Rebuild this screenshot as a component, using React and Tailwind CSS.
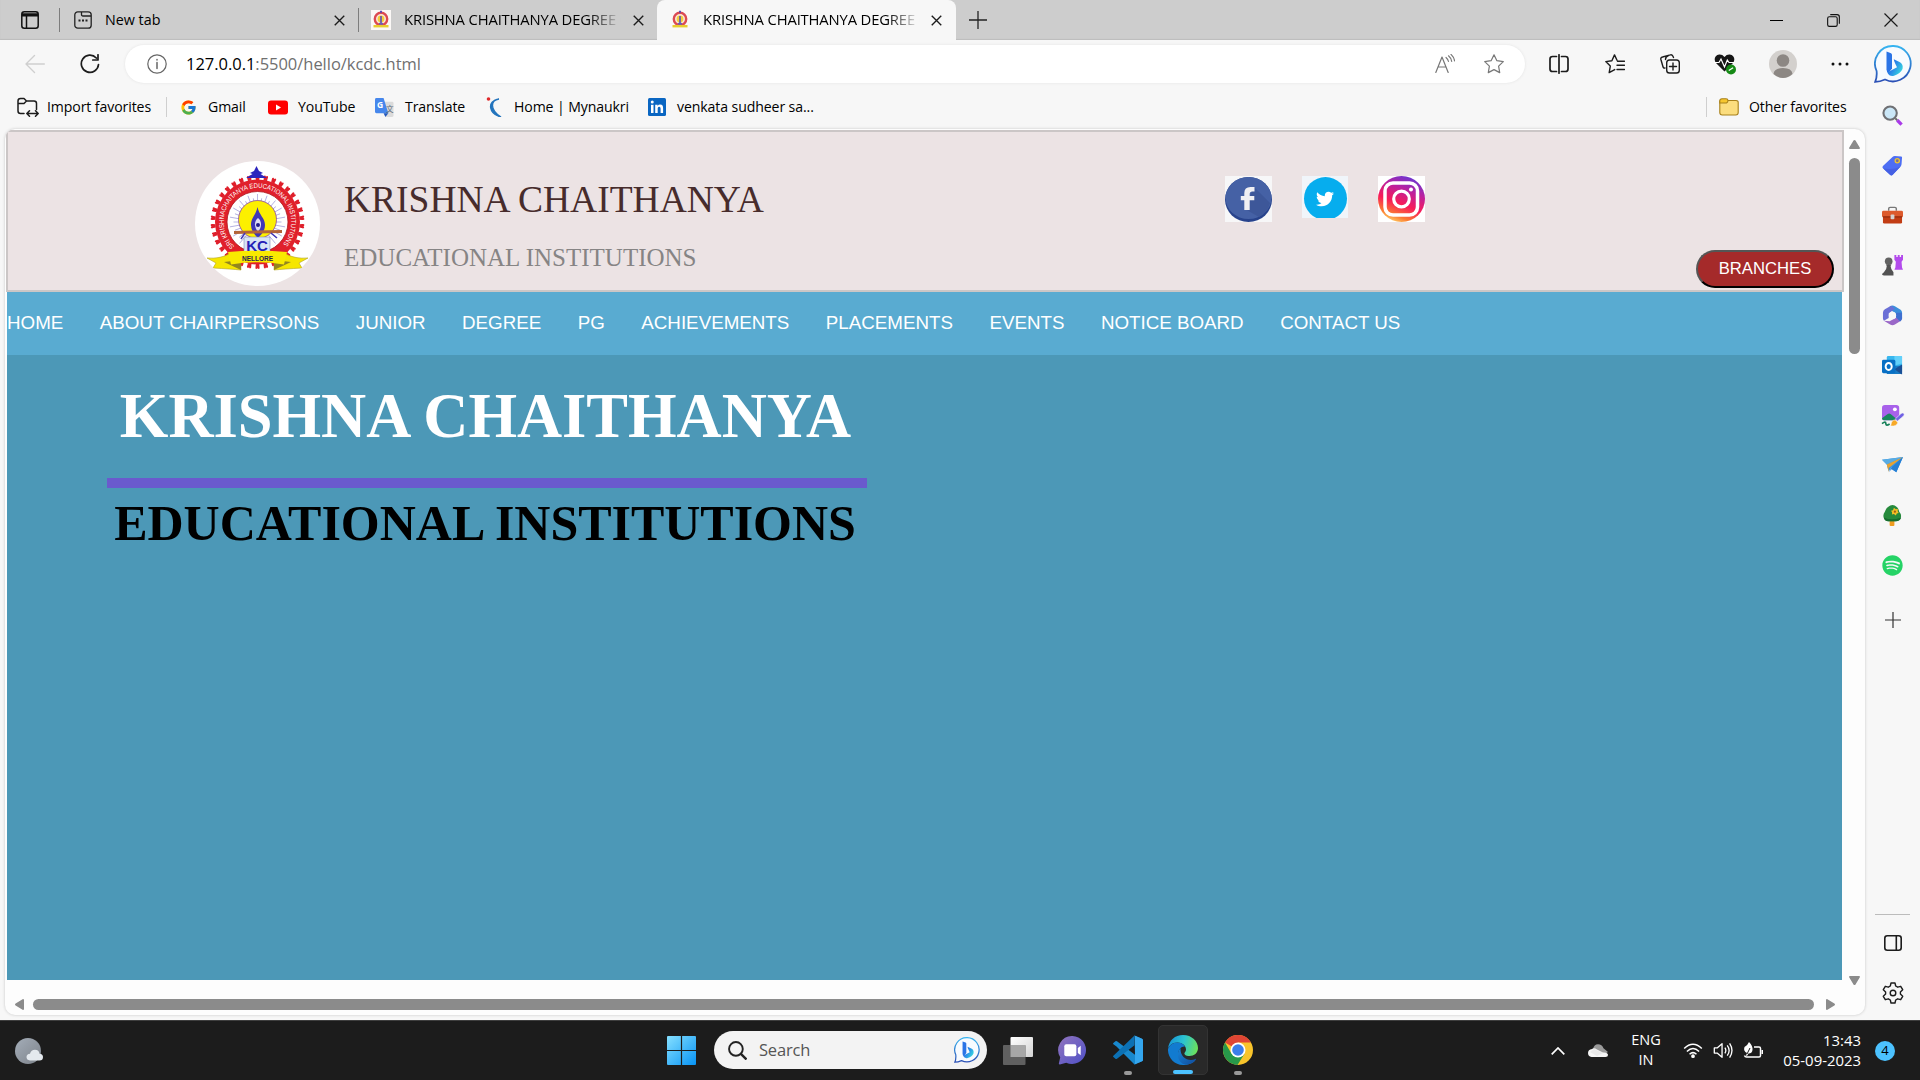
import React from "react";
import { FcGoogle } from "react-icons/fc";
import { FaTwitter, FaSpotify } from "react-icons/fa";

const ui = "font-['Open_Sans','Noto_Sans',sans-serif]";

/* ---------- shared drawings ---------- */

function Seal({ className }) {
  const teeth = Array.from({ length: 34 }, (_, i) => (i * 360) / 34);
  const rays = Array.from({ length: 36 }, (_, i) => i * 10);
  return (
    <svg viewBox="0 0 125 125" className={className}>
      <defs>
        <path id="sealArc" d="M39.500 85.500 A33.800 33.800 0 1 1 85.500 85.500" />
      </defs>
      {teeth.map((a) => (
        <g key={a} transform={`rotate(${a} 62.500 61)`}>
          <path d="M60.800 19 L60.500 16.500 Q59.800 14 61.500 14 L62.500 14.800 L63.500 14 Q65.200 14 64.500 16.500 L64.200 19 Z" fill="#df1f2b" />
        </g>
      ))}
      <circle cx="62.500" cy="61" r="42.500" fill="#e0202b" />
      <circle cx="62.500" cy="61" r="30.500" fill="#fff" stroke="#a9161d" strokeWidth="0.800" />
      <text fill="#fff" fontSize="6.800" className="font-['Liberation_Sans',sans-serif]">
        <textPath href="#sealArc" textLength="158" lengthAdjust="spacingAndGlyphs">SRI KRISHNACHAITANYA EDUCATIONAL INSTITUTIONS</textPath>
      </text>
      {rays.map((a) => (
        <line key={a} x1="62.500" y1={a % 20 ? 37 : 33} x2="62.500" y2="44" stroke="#8b86d0" strokeWidth="0.600" transform={`rotate(${a} 62.500 61)`} />
      ))}
      <circle cx="62.500" cy="58.500" r="19" fill="#fcf000" stroke="#8a45a0" strokeWidth="0.800" />
      <path d="M61.500 5 L64 10 L68 12 L65.500 13 L72 17 H51 L57.500 13 L55 12 L59 10 Z" fill="#2c25bd" />
      <path d="M62.500 46 C64 54 70 57 70 64 C70 70 66 74 63 77 C60 74 56 70 56 64 C56 57 61 54 62.500 46Z" fill="#4037b7" />
      <path d="M63 57 C67 60 67 66 63 71 C59 66 59 60 63 57Z" fill="#dcdcf4" />
      <circle cx="63" cy="64" r="2" fill="#221a8c" />
      <path d="M39 71.500 L87 70.500" stroke="#b3653a" strokeWidth="3" />
      <path d="M50 72l-4 6 M76 72l6 5" stroke="#4037b7" strokeWidth="1.500" />
      <rect x="49" y="76" width="26" height="17" fill="#d7e3f5" stroke="#6f79ad" strokeWidth="0.500" />
      <path d="M12 97 Q25 98 34 93 L45 91 L46 109 Q36 108 18 107 L21 102 Z M113 97 Q100 98 91 93 L80 91 L79 109 Q89 108 107 107 L104 102 Z" fill="#f6e600" stroke="#b1a321" strokeWidth="0.600" />
      <path d="M29 101 L46 99 V109 Z M96 101 L79 99 V109 Z" fill="#93851f" />
      <path d="M33 91 Q62 88 92 91 L89 103.500 Q62 99 36 103.500 Z" fill="#f9ea00" />
      <text x="62" y="90" textAnchor="middle" fontSize="15" fontWeight="700" fill="#2521b6" className="font-['Liberation_Sans',sans-serif]">KC</text>
      <text x="62.500" y="100" textAnchor="middle" fontSize="6.500" fontWeight="700" fill="#27254f" className="font-['Liberation_Sans',sans-serif]">NELLORE</text>
    </svg>
  );
}

function MiniSeal() {
  return (
    <svg viewBox="0 0 20 20" className="size-5 bg-[#fbf8f6]">
      <circle cx="10" cy="9" r="6.200" fill="#fae8d7" stroke="#dc4a52" strokeWidth="2.400" />
      <circle cx="10" cy="9" r="3.400" fill="#f3cf3a" />
      <path d="M10 6v7" stroke="#5b4bb8" strokeWidth="1.600" />
      <path d="M10 .800v2" stroke="#5046b5" strokeWidth="1.800" />
      <path d="M2.500 16.200h15" stroke="#e9cd2e" strokeWidth="2.400" />
      <path d="M8 13.800h4" stroke="#6c5fb5" strokeWidth="1.800" />
    </svg>
  );
}

function Bing({ className }) {
  return (
    <svg viewBox="0 0 38 38" className={className}>
      <defs>
        <linearGradient id="bingRing" x1="0" y1="0" x2="0" y2="1">
          <stop offset="0" stopColor="#36b4f0" />
          <stop offset="1" stopColor="#2b4fb5" />
        </linearGradient>
        <linearGradient id="bingB" x1="0" y1="0" x2="1" y2="0.600">
          <stop offset="0" stopColor="#2454d6" />
          <stop offset="0.500" stopColor="#2a86e8" />
          <stop offset="1" stopColor="#36d5e0" />
        </linearGradient>
      </defs>
      <path d="M19.500 1 A17.700 17.700 0 1 1 11 34.500 Q6 36.800 1.200 36.800 Q3.200 32 2.600 26 A17.700 17.700 0 0 1 19.500 1Z" fill="#f7fbff" stroke="url(#bingRing)" strokeWidth="1.800" />
      <path d="M12.500 6.500 L17 8.200 Q18 8.700 18 10 V23.500 L14.500 28 Q12.500 27 12.500 24.500Z" fill="#2a74e6" />
      <path d="M19.800 14.300 L26 17.300 Q29.500 19.500 28.500 24 Q26.500 28.500 20 30.800 Q15.500 32 13.300 27.500 L23 22.300 L21.300 18.700 Q20 16.500 19.800 14.300Z" fill="url(#bingB)" />
    </svg>
  );
}

function Close({ className = "size-[11px]" }) {
  return (
    <svg viewBox="0 0 12 12" className={className} fill="none" stroke="#1b1b1b" strokeWidth="1.500">
      <path d="M.8.8l10.400 10.400M11.200.8L.8 11.200" />
    </svg>
  );
}

/* ---------- browser chrome ---------- */

function TabTitle() {
  return (
    <span className="-mt-px ml-[13px] w-[217px] overflow-hidden whitespace-nowrap tracking-[-0.150px] [mask-image:linear-gradient(to_right,black_85%,transparent_100%)]">KRISHNA CHAITHANYA DEGREE C</span>
  );
}

function TabStrip() {
  return (
    <div className="flex h-10 items-stretch bg-[#cdcdcd] text-[14.800px] text-black shadow-[inset_0_-1px_1px_#bdbdbd]">
      <div className="flex w-[59px] items-center pl-[21px]">
        <svg viewBox="0 0 18 18" className="size-[18px]" fill="none" stroke="#111" strokeWidth="1.500">
          <rect x=".8" y=".8" width="16.400" height="16.400" rx="2.500" />
          <path d="M1 3.400h16M1 4.500h16" strokeWidth="2.200" />
          <path d="M5.500 5v12" />
        </svg>
      </div>
      <div className="my-2 w-px bg-[#7d7d7d]" />
      <div className="flex w-[298px] items-center pl-[14px]">
        <svg viewBox="0 0 18 18" className="size-[18px]" fill="none" stroke="#222" strokeWidth="1.300">
          <rect x=".8" y=".8" width="16.400" height="16.400" rx="3" />
          <path d="M7.500 1v2.500q0 1.500 1.500 1.500h8" />
          <path d="M4.500 9.500h2M8 9.500h2M11.500 9.500h2" strokeWidth="2" />
        </svg>
        <span className="-mt-px ml-[13px] w-[229px] whitespace-nowrap text-[14.300px]">New tab</span>
        <Close />
      </div>
      <div className="my-2 w-px bg-[#7d7d7d]" />
      <div className="flex w-[298px] items-center pl-[12px]">
        <MiniSeal />
        <TabTitle />
        <Close className="ml-[12px] size-[11px]" />
      </div>
      <div className="flex w-[299px] items-center rounded-t-lg bg-[#f7f7f7] pl-[13px]">
        <MiniSeal />
        <TabTitle />
        <Close className="ml-[11px] size-[11px]" />
      </div>
      <div className="flex items-center pl-[13px]">
        <svg viewBox="0 0 18 18" className="size-[18px]" stroke="#222" strokeWidth="1.300"><path d="M9 0v18M0 9h18" /></svg>
      </div>
      <div className="ml-auto flex items-center pr-[22px]">
        <div className="h-px w-[13px] bg-black" />
        <svg viewBox="0 0 14 14" className="ml-[44px] size-[13px]" fill="none" stroke="#111" strokeWidth="1.200">
          <rect x=".7" y="3" width="10.300" height="10.300" rx="1.800" />
          <path d="M3.500.7h7.300q2.500 0 2.500 2.500v7.300" />
        </svg>
        <svg viewBox="0 0 14 14" className="ml-[44px] size-[14px]" fill="none" stroke="#1b1b1b" strokeWidth="1.200"><path d="M.5.5l13 13M13.500.5l-13 13" /></svg>
      </div>
    </div>
  );
}

const ink = { fill: "none", stroke: "#1c1c1c", strokeWidth: 1.4, strokeLinejoin: "round", strokeLinecap: "round" };

function Toolbar() {
  return (
    <div className="flex h-12 items-center">
      <svg viewBox="0 0 20 20" className="ml-[25px] size-5" {...ink} stroke="#cfcfcf"><path d="M19.300 10H1M9.500 1.500L1 10l8.500 8.500" /></svg>
      <svg viewBox="0 0 20 20" className="ml-[35px] size-5" {...ink} strokeWidth="1.700"><path d="M18.500 10.500A8.600 8.600 0 1 1 16.300 4M18 .8v5.200h-5.200" /></svg>
      <div className="ml-[25px] flex h-[38px] w-[1400px] items-center rounded-full bg-white shadow-[0_0_3px_#e2e2e2]">
        <svg viewBox="0 0 20 20" className="ml-[22px] size-5" {...ink} stroke="#666" strokeWidth="1.200"><circle cx="10" cy="10" r="9.200" /><path d="M10 8.500v6M10 5.500v.4" strokeWidth="1.500" /></svg>
        <span className="ml-[19px] whitespace-nowrap text-[16.500px] tracking-[-0.030px] text-[#707070]"><span className="text-black">127.0.0.1</span>:5500/hello/kcdc.html</span>
        <svg viewBox="0 0 20 20" className="ml-auto size-5" {...ink} stroke="#777" strokeWidth="1.200"><path d="M.8 18.500L7 3l6.200 15.500M3 13h8M11 3.500q2 1.600 2.500 4M13.500 1.800q2.500 2 3.200 5.700M16 .4q2.800 2.500 3.600 6.600" /></svg>
        <svg viewBox="0 0 20 20" className="ml-[29px] mr-[21px] size-5" {...ink} stroke="#777" strokeWidth="1.200"><path d="M10 .8l2.900 5.900 6.400.9-4.700 4.500 1.100 6.500-5.700-3-5.700 3 1.100-6.500L.7 7.600l6.400-.9z" /></svg>
      </div>
      <svg viewBox="0 0 20 20" className="ml-[24px] size-5" {...ink} strokeWidth="1.700"><path d="M7.500 2.500H3.500Q1 2.500 1 5v10q0 2.500 2.500 2.500h4M12.500 2.500h4Q19 2.500 19 5v10q0 2.500-2.500 2.500h-4M10 .8v18.400" /></svg>
      <svg viewBox="0 0 20 20" className="ml-[36px] size-5" {...ink}><path d="M12 6.300L9.500.9 6.900 6.700.8 7.600l4.500 4.500-1.100 6.500 5.500-3M12.500 7.200h7M12 11.300h7.500M12 15.500h7.500" /></svg>
      <svg viewBox="0 0 20 20" className="ml-[35px] size-5" {...ink}><path d="M13.500 3.500L12.800 2Q12 .4 10.300.9L2.500 3Q.4 3.500.9 5.500l2 7Q3.400 14.500 5 14M5.500 5.500q0-3 3-4" /><rect x="6.700" y="6" width="12.600" height="13" rx="2.800" fill="#f7f7f7" /><path d="M13 9v7M9.500 12.500h7" /></svg>
      <svg viewBox="0 0 22 22" className="ml-[34px] size-[22px]">
        <path d="M10.500 18.500L2 10C-.5 7 .5 2 5.300 1.500q3-.2 5.200 2.400 2.200-2.600 5.200-2.400C20.500 2 21.500 7 19 10z" fill="#161616" />
        <path d="M0 9.500h5l2-3.500 3.500 8 2.800-7 1.700 2.500H21" fill="none" stroke="#fff" strokeWidth="1.200" />
        <circle cx="17" cy="16.500" r="5" fill="#168a16" /><path d="M14.800 17.500l4.300-2.700" stroke="#fff" strokeWidth="1.300" />
      </svg>
      <svg viewBox="0 0 28 28" className="ml-[33px] size-7"><circle cx="14" cy="14" r="14" fill="#d3d0cd" /><circle cx="14" cy="10.500" r="6.300" fill="#8c8783" /><path d="M4.500 24Q5 18 14 18t9.500 6Q19 28 14 28t-9.500-4z" fill="#8c8783" /></svg>
      <svg viewBox="0 0 18 4" className="ml-[34px] h-1 w-[18px]" fill="#111"><circle cx="2" cy="2" r="1.500" /><circle cx="9" cy="2" r="1.500" /><circle cx="16" cy="2" r="1.500" /></svg>
      <Bing className="ml-[25px] size-[38px]" />
    </div>
  );
}

function Folder() {
  return (
    <svg viewBox="0 0 20 18" className="h-[18px] w-5" stroke="#a8811b" strokeWidth="1.100">
      <path d="M.8 3v11.500q0 2.500 2.500 2.500h13.400q2.500 0 2.500-2.500V4.500Q19.200 2.500 17 2.500H9z" fill="#fbdd7e" />
      <path d="M.8 5V3Q.8.800 3 .800h4q2 0 2 1.700T7.500 5z" fill="#f6c62e" />
    </svg>
  );
}

function FavoritesBar() {
  const label = "whitespace-nowrap";
  return (
    <div className="flex h-[38px] w-[1865px] items-center text-[14.100px] tracking-[-0.100px] text-black">
      <svg viewBox="0 0 22 20" className="ml-[17px] h-5 w-[22px]" {...ink} strokeWidth="1.500">
        <path d="M7 16.500H3.500q-2.500 0-2.500-2.500V4q0-2.500 2.500-2.500H7L9.500 4H17q2.500 0 2.500 2.500v6M1 6.500h6L9.500 4M10 16.500h11M12.500 13.800L9.800 16.500l2.700 2.700M18.500 13.800l2.700 2.700-2.700 2.700" />
      </svg>
      <span className={`ml-[8px] w-[119px] ${label}`}>Import favorites</span>
      <div className="h-5 w-px bg-[#cfcfcf]" />
      <FcGoogle className="ml-[13px] size-[17px]" />
      <span className={`ml-[11px] w-[60px] ${label}`}>Gmail</span>
      <svg viewBox="0 0 20 14" className="h-[15px] w-5"><rect width="20" height="14" rx="3" fill="#f00" /><path d="M8 4l5 3-5 3z" fill="#fff" /></svg>
      <span className={`ml-[10px] w-[77px] ${label}`}>YouTube</span>
      <svg viewBox="0 0 20 20" className="size-[19px]"><path d="M7 4h11q1.500 0 1.500 1.500v13Q19.500 20 18 20h-6z" fill="#dbdbdb" /><path d="M1.500 0H9l5 16H1.500Q0 16 0 14.500v-13Q0 0 1.500 0z" fill="#4687ec" /><path d="M9 16h5l-3 4z" fill="#2459bd" /><text x="2" y="11" fontSize="9" fill="#fff" fontWeight="700">G</text><text x="11.500" y="15" fontSize="8" fill="#5d6c7b" className="font-['Noto_Sans_CJK_SC',sans-serif]">文</text></svg>
      <span className={`ml-[11px] w-[80px] ${label}`}>Translate</span>
      <svg viewBox="0 0 18 20" className="h-5 w-[18px]"><path d="M14 2C6 3 4 12 16 20 4 17 1 4 14 2z" fill="#2374bd" stroke="#2374bd" strokeWidth="1.300" /><circle cx="3.500" cy="2" r="1.800" fill="#e02a2c" /></svg>
      <span className={`ml-[11px] w-[134px] ${label}`}>Home | Mynaukri</span>
      <svg viewBox="0 0 18 18" className="size-[18px]"><rect width="18" height="18" rx="1.500" fill="#0a66c2" /><g fill="#fff"><rect x="3" y="6.800" width="2.500" height="8.200" /><circle cx="4.250" cy="4" r="1.500" /><path d="M7.200 6.800h2.400v1.100q.8-1.300 2.500-1.300c2.500 0 3 1.600 3 3.900V15h-2.500v-4c0-1.200-.2-2.300-1.400-2.300-1.300 0-1.500 1.100-1.500 2.200V15H7.200z" /></g></svg>
      <span className={`ml-[11px] ${label}`}>venkata sudheer sa...</span>
      <div className="ml-auto h-5 w-px bg-[#cfcfcf]" />
      <div className="ml-[12px]"><Folder /></div>
      <span className={`ml-[10px] w-[116px] ${label}`}>Other favorites</span>
    </div>
  );
}

/* ---------- web page ---------- */

function SocialLinks() {
  return (
    <div className="flex items-start gap-[30px]">
      <svg viewBox="0 0 47 46" className="h-[46px] w-[47px] bg-[#f7f7f8]">
        <ellipse cx="23.500" cy="23.500" rx="23.500" ry="22.500" fill="#28438c" />
        <ellipse cx="23.500" cy="22" rx="23" ry="21" fill="#4561a5" />
        <path d="M29 11L45 27Q42 37 34 41L20 33z" fill="#3d5799" />
        <path d="M29.500 11v4.500h-2.200Q24.700 15.500 24.700 18v2h4.600v4.300h-4.600V34H19.300V24.300h-3.500V20h3.500v-3Q19.300 11 25.500 11z" fill="#f0f0f3" />
      </svg>
      <div className="h-[42px] w-[46px] overflow-hidden bg-[#f0f5fa] px-[1.500px] pt-[1px]">
        <div className="flex size-[43px] items-center justify-center rounded-full bg-[#06adee]"><FaTwitter className="size-[18px] text-white" /></div>
      </div>
      <svg viewBox="0 0 47 46" className="h-[46px] w-[47px] bg-white">
        <defs>
          <linearGradient id="igBase" x1=".7" y1="0" x2=".3" y2="1"><stop offset="0" stopColor="#6637d5" /><stop offset=".3" stopColor="#bd209d" /><stop offset=".6" stopColor="#f81c58" /><stop offset=".85" stopColor="#fb7b32" /><stop offset="1" stopColor="#ffd268" /></linearGradient>
        </defs>
        <ellipse cx="23.500" cy="23" rx="23.500" ry="23" fill="url(#igBase)" />
        <rect x="7" y="7" width="32.500" height="32" rx="8" fill="none" stroke="#fff" strokeWidth="3.500" />
        <circle cx="23.500" cy="23" r="7.800" fill="none" stroke="#fff" strokeWidth="3.200" />
        <circle cx="33" cy="13.500" r="2" fill="#fff" />
      </svg>
    </div>
  );
}

const links = ["HOME", "ABOUT CHAIRPERSONS", "JUNIOR", "DEGREE", "PG", "ACHIEVEMENTS", "PLACEMENTS", "EVENTS", "NOTICE BOARD", "CONTACT US"];

function WebPage() {
  return (
    <div className="w-[1838px]">
      <header className="flex h-[162px] border-2 border-[#cbc6c6] bg-[#ece3e4]">
        <div className="ml-[187px] mt-[29px] size-[125px] shrink-0 overflow-hidden rounded-full bg-white"><Seal className="size-[125px]" /></div>
        <div className="ml-[24px] w-[881px] whitespace-nowrap font-['Liberation_Serif',serif]">
          <h2 className="mt-[46px] text-[37.500px] leading-[43px] text-[#472c2c]">KRISHNA CHAITHANYA</h2>
          <h3 className="mt-[22px] text-[25px] leading-[29px] text-[#868484]">EDUCATIONAL INSTITUTIONS</h3>
        </div>
        <div className="mt-[44px]"><SocialLinks /></div>
        <button className="ml-auto mr-[8px] mt-[118px] h-[38px] w-[138px] rounded-full border-2 border-t-[#555] border-l-[#555] border-r-black border-b-black bg-[#a52a2a] font-['Liberation_Sans',sans-serif] text-[16.670px] leading-none text-white">BRANCHES</button>
      </header>
      <nav className="ml-px flex h-[63px] w-[1835px] items-center gap-[36.500px] bg-[#59abd1] whitespace-nowrap font-['Liberation_Sans',sans-serif] text-[18.750px] text-white">
        {links.map((l) => <a key={l}>{l}</a>)}
      </nav>
      <main className="ml-px h-[625px] w-[1835px] bg-[#4c98b7] pl-[100px]">
        <div className="w-[760px] text-center font-['Liberation_Serif',serif] font-bold whitespace-nowrap">
          <h1 className="pr-[3px] pt-[25px] text-[62.500px] leading-[72px] tracking-[-0.050px] text-white">KRISHNA CHAITHANYA</h1>
          <div className="mt-[26px] h-[10px] bg-[#6a5acd]" />
          <h2 className="mt-[6px] pr-[4px] text-[50px] leading-[58px] tracking-[-0.030px] text-black">EDUCATIONAL INSTITUTIONS</h2>
        </div>
      </main>
    </div>
  );
}

function Viewport() {
  return (
    <div className="ml-[5px] flex h-[886px] w-[1860px] flex-col overflow-hidden rounded-[10px] bg-[#fdfdfd] shadow-[0_0_3px_#c4c4c4]">
      <div className="flex h-[851px] pl-px pt-px">
        <WebPage />
        <div className="flex w-[21px] flex-col items-center pt-[10px]">
          <svg viewBox="0 0 11 9" className="h-[9px] w-[11px]" fill="#8b8b8b"><path d="M5.500 0q.7 0 1 .6L11 8q0 1-1 1H1Q0 9 0 8L4.500.6q.3-.6 1-.6z" /></svg>
          <div className="mt-[9px] h-[196px] w-[11px] rounded-full bg-[#8b8b8b]" />
        </div>
      </div>
      <div className="flex h-[35px] items-start">
        <svg viewBox="0 0 9 11" className="ml-[10px] mt-[19px] h-[11px] w-[9px]" fill="#8b8b8b"><path d="M0 5.500q0-.7.600-1L8 0q1 0 1 1v9q0 1-1 1L.6 6.500q-.6-.3-.6-1z" /></svg>
        <div className="ml-[9px] mt-[19px] h-[11px] w-[1781px] rounded-full bg-[#8b8b8b]" />
        <svg viewBox="0 0 9 11" className="ml-[12px] mt-[19px] h-[11px] w-[9px]" fill="#8b8b8b"><path d="M9 5.500q0-.7-.6-1L1 0Q0 0 0 1v9q0 1 1 1l7.400-4.500q.6-.3.6-1z" /></svg>
        <svg viewBox="0 0 11 9" className="-mt-1 ml-[14px] h-[9px] w-[11px]" fill="#8b8b8b"><path d="M5.500 9q.7 0 1-.6L11 1q0-1-1-1H1Q0 0 0 1l4.500 7.400q.3.6 1 .6z" /></svg>
      </div>
    </div>
  );
}

/* ---------- side panel ---------- */

const sideIcons = [
  <><circle cx="8.500" cy="8.500" r="7" fill="#cbe7f7" stroke="#6f7074" strokeWidth="2.200" /><path d="M14 14l2 2" stroke="#666" strokeWidth="2" /><path d="M16 16l4.500 4.500" stroke="#a93ae8" strokeWidth="3.500" /></>,
  <><path d="M1 11.500L11 2q1-1 2.500-1L20 1.500q1 0 1 1l-.500 7q0 1.300-1 2.500L11 21q-1.200 1-2.400 0L1 14q-1.200-1.200 0-2.500z" fill="#4d6ef3" /><path d="M1 14l7.600 7q1.200 1 2.400 0l8.500-9q-8 4-18.500 2z" fill="#4560e4" /><circle cx="16" cy="6" r="2.200" fill="#78709b" stroke="#ecc331" strokeWidth="1.400" /></>,
  <><path d="M7 6V4q0-1.500 1.500-1.500h5Q15 2.500 15 4v2" fill="none" stroke="#777" strokeWidth="1.500" /><rect x="0" y="6" width="22" height="7" rx="1.500" fill="#dd5a2c" /><path d="M1 12h20v6q0 1.500-1.500 1.500h-17Q1 19.500 1 18z" fill="#c23d14" /><path d="M1 12.500h20" stroke="#86260b" /><rect x="9" y="10" width="4" height="5" rx="1" fill="#d6d2cf" /></>,
  <><path d="M13 0h2v2h1.500V0h2v2H20V0h2v5l-1.500 2 .5 6 1 2.500H13l1-2.500.5-6L13 5z" fill="#b34bec" /><circle cx="7" cy="6.500" r="4" fill="#626262" /><path d="M4 10h6l-1 1.500q.3 4 3 6.500v3.500H2Q0 21.500 0 20l2-2q3-2.500 3-6.500z" fill="#525252" /></>,
  <>
    <path d="M8.500 1.200Q11 0 13.500 1.200L19.500 5Q21 6 21 8v6L14.500 10 14 8.500 6.500 4z" fill="#3c8fdb" />
    <path d="M9.500.8L3 4.500Q1 5.800 1 8v6q0 1.500 1 2.500l5-3V9l6.500-5z" fill="#6a6fd6" />
    <path d="M2 16.500l6.500 4q2.500 1.200 5 0l5.500-3.500q2-1.500 2-3.500V13l-6-3v3L8 17z" fill="#9a68c8" />
    <path d="M21 8v6q0 2-2 3.300l-4.500-4.500V8z" fill="#3f6fd0" />
    <circle cx="11" cy="11" r="3.800" fill="#f7f7f7" />
  </>,
  <><rect x="5" y="1" width="16" height="18" rx="1.500" fill="#38b7ee" /><path d="M13 1h8v8l-8 2z" fill="#62d0fa" /><path d="M5 12l16-1v9H5z" fill="#187bc4" /><path d="M13 15l8-5v10.500z" fill="#1a4f95" /><rect x="0" y="5" width="14" height="14" rx="1.500" fill="#0870c5" /><ellipse cx="7" cy="12" rx="3.200" ry="3.700" fill="none" stroke="#fff" strokeWidth="2" /></>,
  <><rect x="0" y="0" width="18" height="16" rx="3" fill="#a861ea" /><circle cx="13.500" cy="4.500" r="2" fill="#fff" /><path d="M0 14l6-4.500q1.500-1 3 0l6 5-2 1.500H2q-2 0-2-2z" fill="#18875f" /><path d="M9 22l1-4q2-3.500 4.500-2l2 2.500q-1 4-7.500 3.500z" fill="#f7a927" stroke="#f7f7f7" strokeWidth=".6" /><path d="M14 14.500l6-5.500q2-1.500 3 0t-1 3l-6 5z" fill="#7061e4" stroke="#f7f7f7" strokeWidth=".6" /><path d="M0 19.500q4-3 4 0t4 .5" stroke="#168159" fill="none" strokeWidth="1.800" /></>,
  <><path d="M0 5l22-3-7 16-5-5-3 4-2-7z" fill="#3695e4" /><path d="M0 5l22-3L5 10z" fill="#59ace3" /><path d="M5 10l17-8L7 13.500V18z" fill="#e6a332" /><path d="M7 18l3-5 12-11-7 16-5-3z" fill="#257fd5" /></>,
  <><path d="M8 15h5v6q0 1-1 1H9q-1 0-1-1z" fill="#ef9c20" /><path d="M11 0q6 1 7 7 3 3 1.500 7-1.500 3-5 3h-8Q3 17 2 14 .5 10 3 7q2-6 8-7z" fill="#268a3c" /><path d="M2 13q8 4 18 0-1 4-5.500 4h-8Q3 17 2 13z" fill="#166c2e" /><path d="M12.500 3l2 1.500 2-.5v2.500l1 2-2 .5-1 2-2-1.500-2 .5v-2.500L9.500 6l2-.5z" fill="#f4bf25" /><circle cx="13.500" cy="7" r="1.200" fill="#a45c14" /></>,
];

function SideBar() {
  return (
    <aside className="flex h-[932px] w-[55px] flex-col items-center pt-[2px]">
      {sideIcons.map((icon, i) => (
        <div key={i} className="flex h-[50px] w-[55px] shrink-0 items-center justify-center"><svg viewBox="0 0 22 22" className="h-[21px] w-[21px] overflow-visible">{icon}</svg></div>
      ))}
      <div className="flex h-[50px] items-center"><FaSpotify className="size-[21px] text-[#25d366]" /></div>
      <svg viewBox="0 0 16 16" className="mt-[22px] size-4" stroke="#333" strokeWidth="1.200"><path d="M8 0v16M0 8h16" /></svg>
      <div className="mt-auto h-px w-[35px] bg-[#bcbcbc]" />
      <svg viewBox="0 0 18 16" className="mt-[20px] h-4 w-[18px]" {...ink} strokeWidth="1.600"><rect x=".8" y=".8" width="16.400" height="14.400" rx="2.500" /><path d="M12.300 1v14" /></svg>
      <svg viewBox="0 0 22 22" className="mb-[16px] mt-[31px] size-[22px]" {...ink}>
        <path d="M9 1h4l.7 3 2 1.200 3-.900 2 3.400-2.300 2.200v2.200l2.300 2.200-2 3.400-3-.9-2 1.200-.7 3H9l-.7-3-2-1.200-3 .9-2-3.400 2.300-2.200V9.900L1.300 7.700l2-3.400 3 .9 2-1.200z" /><circle cx="11" cy="11" r="2.800" />
      </svg>
    </aside>
  );
}

/* ---------- taskbar ---------- */

function TaskBar() {
  return (
    <footer className="flex h-[60px] items-center border-t border-[#3e3e3e] bg-[#1c1c1c] text-white">
      <svg viewBox="0 0 28 26" className="ml-[15px] h-[26px] w-7">
        <defs><linearGradient id="moon" x1="0" y1="0" x2="1" y2="1"><stop offset="0" stopColor="#a4adb8" /><stop offset="1" stopColor="#7d838b" /></linearGradient></defs>
        <circle cx="13" cy="13" r="13" fill="url(#moon)" /><path d="M15 22.500q-3.500-.5-3.500-3.500 0-3 3.500-3.200 1-4 5-4t4.500 4q3.500.200 3.500 3.200 0 3.500-3.500 3.500z" fill="#e4e9ee" />
      </svg>
      <svg viewBox="0 0 29 29" className="ml-[624px] size-[29px]">
        <defs><linearGradient id="win" x1="0" y1="0" x2="29" y2="29" gradientUnits="userSpaceOnUse"><stop stopColor="#86e0ff" /><stop offset="1" stopColor="#0793f5" /></linearGradient></defs>
        <path d="M0 1q0-1 1-1h12.900v13.900H0zM15.100 0H28q1 0 1 1v12.900H15.100zM0 15.100h13.900V29H1q-1 0-1-1zM15.100 15.100H29V28q0 1-1 1H15.100z" fill="url(#win)" />
      </svg>
      <div className="-mt-px ml-[18px] flex h-[38px] w-[273px] items-center rounded-full bg-[#f3f3f3] pl-[14px] pr-[7px]">
        <svg viewBox="0 0 18 18" className="size-[19px]" fill="none" stroke="#222" strokeWidth="1.800"><circle cx="7.500" cy="7.500" r="6.500" /><path d="M12 12l5.500 5.500" strokeWidth="2.200" /></svg>
        <span className="ml-[12px] text-[16.500px] tracking-[-0.200px] text-[#555]">Search</span>
        <Bing className="ml-auto size-[26px]" />
      </div>
      <svg viewBox="0 0 30 28" className="ml-[16px] h-7 w-[30px]">
        <defs><linearGradient id="tv" x1="0" y1="0" x2="1" y2="1"><stop stopColor="#fff" /><stop offset="1" stopColor="#d4d4d4" /></linearGradient></defs>
        <rect x="7.500" y="0" width="22.500" height="20" rx="1" fill="url(#tv)" /><rect x="0" y="8" width="22.500" height="20" rx="1" fill="#606060" /><path d="M7.500 8h15v12h-15z" fill="#a7a7a7" />
      </svg>
      <svg viewBox="0 0 30 30" className="ml-[25px] size-[29px]">
        <defs><linearGradient id="chat" x1="0" y1="0" x2="1" y2="1"><stop stopColor="#9174bd" /><stop offset="1" stopColor="#4e50c8" /></linearGradient></defs>
        <path d="M15 0a14.500 14.500 0 1 1-6.500 27.700L2 29.500q-1.500 0-1-1.500l1.300-6A14.500 14.500 0 0 1 15 0z" fill="url(#chat)" /><rect x="6.500" y="8.500" width="12.500" height="12.500" rx="2" fill="#fff" /><path d="M20.500 12.500l3-2.500v10l-3-2.500z" fill="#fff" />
      </svg>
      <div className="ml-[22px] flex h-[50px] w-[38px] flex-col items-center pt-[9px]">
        <svg viewBox="0 0 30 30" className="size-[30px]"><path d="M21.500.4L29 3.800q1 .5 1 1.500v19.400q0 1-1 1.500l-7.500 3.400L3.500 11.600.4 9.300Q-.3 8.700.4 8l2-1.800q.8-.6 1.600 0l18 13.600z" fill="#1888cd" /><path d="M.4 20.700L21.500.4V10.200L4 23.800q-.8.600-1.600 0L.4 22q-.7-.6 0-1.300z" fill="#0c71b4" /><path d="M21.500.4L29 3.800q1 .5 1 1.500v19.400q0 1-1 1.500l-7.500 3.400q.5-.6.5-1.600V2q0-1-.5-1.600z" fill="#34a6ee" /></svg>
        <div className="mt-[6px] h-1 w-2 rounded-full bg-[#999]" />
      </div>
      <div className="-mt-px ml-[11px] flex h-[50px] w-[50px] flex-col items-center rounded-[5px] border border-[#333] bg-[#292929] pt-[9px]">
        <svg viewBox="0 0 30 30" className="size-[30px]">
          <defs>
            <linearGradient id="edgeTop" x1="0" y1=".3" x2="1" y2=".5"><stop stopColor="#1694d8" /><stop offset=".5" stopColor="#2cc3d0" /><stop offset="1" stopColor="#6be15c" /></linearGradient>
            <linearGradient id="edgeLow" x1="0" y1="0" x2="1" y2="1"><stop stopColor="#1784d8" /><stop offset="1" stopColor="#114a9a" /></linearGradient>
          </defs>
          <path d="M0 14C1 5 7 0 15 0c9 0 15 6.500 15 13 0 5-4 8-8.500 8-4 0-5.500-1.500-5-3 .6-1 1.500-2 1.500-3.500C18 10.500 14 7.500 9.500 7.500 4 7.500.8 11 0 14z" fill="url(#edgeTop)" />
          <path d="M0 14C2 9 6 7.500 9.500 7.500c3 0 6 1.500 7.500 4-3.500-.5-7 3-6.500 7.500.5 6 6 8.500 11 8 2-.200 4-1 6-2C25 28.500 20 30 15 30 6 30-.5 22 0 14z" fill="#127bd0" />
          <path d="M12.500 13.200C8 17 9 28 17.500 29.800 22 29.500 26 27.500 28 24.500q.3-1-.700-.500C21 27 12 23 12.500 13.200z" fill="url(#edgeLow)" />
        </svg>
        <div className="mt-[5px] h-1 w-5 rounded-full bg-[#4cc2ff]" />
      </div>
      <div className="ml-[11px] flex h-[50px] w-[38px] flex-col items-center pt-[9px]">
        <svg viewBox="0 0 30 30" className="size-[30px]"><circle cx="15" cy="15" r="15" fill="#f8c42b" /><path d="M15 15L2 7.500A15 15 0 0 1 28 7.500H15z" fill="#df4534" /><path d="M2 7.500A15 15 0 0 0 14.500 30L21.500 18.700 15 15 8.500 18.700z" fill="#27984a" /><circle cx="15" cy="15" r="7.500" fill="#fff" /><circle cx="15" cy="15" r="5.800" fill="#3b7eea" /></svg>
        <div className="mt-[6px] h-1 w-2 rounded-full bg-[#999]" />
      </div>
      <div className="ml-auto flex items-center pr-[25px]">
        <svg viewBox="0 0 14 8" className="h-2 w-[14px]" fill="none" stroke="#fff" strokeWidth="1.700"><path d="M.7 7.300L7 1l6.300 6.300" /></svg>
        <svg viewBox="0 0 20 14" className="ml-[23px] h-[14px] w-5"><path d="M5 5Q6 .2 10 .2q4 0 5.500 4L20 8l-6 4L5 9z" fill="#9a9a9a" /><path d="M3.500 13Q0 12.500 0 9q0-3.500 4-4 2-1.500 5 .5l6 3q5-.3 5 2.500 0 2-2.500 2z" fill="#f5f5f5" /><path d="M6 5l9 4-6 3-7-4z" fill="#d4d4d4" opacity=".4" /></svg>
        <div className="-mt-px ml-[18px] w-[40px] text-center text-[14.500px] leading-5">ENG<br />IN</div>
        <svg viewBox="0 0 20 16" className="ml-[17px] h-[15px] w-5" fill="none" stroke="#fff" strokeWidth="1.600"><path d="M.6 5.800q9.400-9 18.800 0M3.500 9q6.500-6.300 13 0M6.300 12q3.700-3.500 7.400 0" /><circle cx="10" cy="14" r="1.200" fill="#fff" /></svg>
        <svg viewBox="0 0 20 18" className="ml-[10px] h-[17px] w-5" fill="none" stroke="#fff" strokeWidth="1.400" strokeLinejoin="round"><path d="M.8 6.300h3L9 1.800v14.400l-5.200-4.500h-3zM12 6q2 3 0 6M14.500 3.500q4 5.500 0 11M17 1.500q5 7.500 0 15" /></svg>
        <svg viewBox="0 0 20 18" className="ml-[10px] h-[18px] w-5"><path d="M11 5h5q1.500 0 1.500 1.500v7q0 1.500-1.500 1.500H3.500Q2 15 1.500 13.500" fill="none" stroke="#fff" strokeWidth="1.500" /><path d="M18.500 8h1.500v4h-1.500z" fill="#fff" /><path d="M6 0q4 4 3.500 8-.5 3.500-4 3.500L4 14l-1-.5 1-2.500Q0 9 1.500 5 4.500 3.500 6 0z" fill="#fff" /><path d="M4 12l3-6" stroke="#1c1c1c" /></svg>
        <div className="-mt-px ml-[18px] w-[80px] whitespace-nowrap text-right text-[14.900px] leading-5">13:43<br />05-09-2023</div>
        <div className="ml-[14px] flex size-5 items-center justify-center rounded-full bg-[#4cc2ff] text-[13px] leading-none text-black">4</div>
      </div>
    </footer>
  );
}

export default function App() {
  return (
    <div className={`flex h-[1080px] w-[1920px] flex-col overflow-hidden bg-[#f7f7f7] ${ui}`}>
      <TabStrip />
      <Toolbar />
      <div className="flex h-[932px]">
        <div className="flex w-[1865px] flex-col">
          <FavoritesBar />
          <div className="mt-[3px]"><Viewport /></div>
        </div>
        <SideBar />
      </div>
      <TaskBar />
    </div>
  );
}
